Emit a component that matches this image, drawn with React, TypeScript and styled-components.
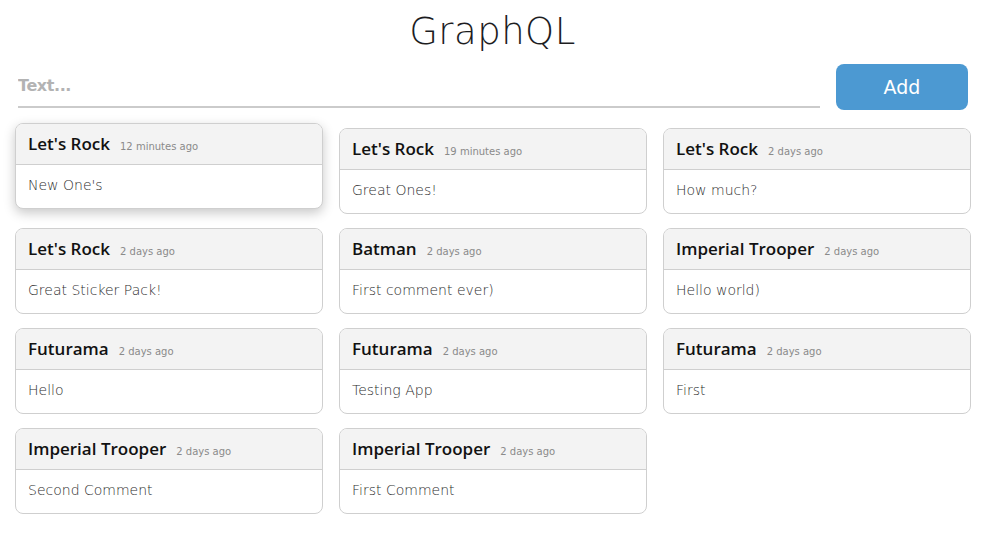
import React from "react";
import styled, { createGlobalStyle } from "styled-components";

const Global = createGlobalStyle`
  html, body { margin: 0; padding: 0; background: #fff; }
  body { font-family: "DejaVu Sans", "Noto Sans", sans-serif; }
  * { box-sizing: border-box; }
`;

const Page = styled.div`
  padding: 0 15px;
  width: 985px;
`;

const Title = styled.h1`
  margin: 0;
  padding-top: 10px;
  height: 58px;
  text-align: center;
  font-size: 37px;
  font-weight: 300;
  line-height: 44px;
  color: #1d1d1f;
  letter-spacing: 0.5px;
`;

const Form = styled.form`
  display: flex;
  align-items: center;
  gap: 16px;
  margin: 6px 2px 0 3px;
`;

const Input = styled.input`
  flex: 1;
  height: 44px;
  margin-top: -2px;
  border: none;
  border-bottom: 2px solid #cbcbcb;
  outline: none;
  padding: 0;
  font-family: inherit;
  font-size: 16px;
  font-weight: 700;
  letter-spacing: -0.4px;
  color: #333;
  background: transparent;
  &::placeholder { color: #b3b3b3; }
`;

const Button = styled.button`
  width: 132px;
  height: 46px;
  border: none;
  border-radius: 8px;
  background: #4c99d2;
  color: #fff;
  font-family: inherit;
  font-size: 19px;
  font-weight: 400;
`;

const Grid = styled.div`
  display: grid;
  grid-template-columns: repeat(3, 308px);
  column-gap: 16px;
  row-gap: 14px;
  margin-top: 18px;
`;

const Card = styled.div<{ $raised?: boolean }>`
  border: 1px solid #cfcfcf;
  border-radius: 8px;
  overflow: hidden;
  background: #fff;
  height: 86px;
  ${(p) =>
    p.$raised &&
    `
    transform: translateY(-5px);
    box-shadow: 0 4px 12px rgba(0,0,0,0.22);
  `}
`;

const Header = styled.div`
  display: flex;
  align-items: baseline;
  height: 41px;
  padding: 8px 12px 0;
  background: #f3f3f3;
  border-bottom: 1px solid #cfcfcf;
`;

const Name = styled.span`
  font-family: "Open Sans", "DejaVu Sans", sans-serif;
  font-size: 17px;
  font-weight: 600;
  color: #111;
`;

const Time = styled.span`
  margin-left: 10px;
  font-size: 10px;
  color: #8a8a8a;
`;

const Body = styled.div`
  padding: 12px 12px 0;
  font-size: 14px;
  font-weight: 300;
  color: #2e2e2e;
`;

const comments = [
  { name: "Let's Rock", time: "12 minutes ago", text: "New One's" },
  { name: "Let's Rock", time: "19 minutes ago", text: "Great Ones!" },
  { name: "Let's Rock", time: "2 days ago", text: "How much?" },
  { name: "Let's Rock", time: "2 days ago", text: "Great Sticker Pack!" },
  { name: "Batman", time: "2 days ago", text: "First comment ever)" },
  { name: "Imperial Trooper", time: "2 days ago", text: "Hello world)" },
  { name: "Futurama", time: "2 days ago", text: "Hello" },
  { name: "Futurama", time: "2 days ago", text: "Testing App" },
  { name: "Futurama", time: "2 days ago", text: "First" },
  { name: "Imperial Trooper", time: "2 days ago", text: "Second Comment" },
  { name: "Imperial Trooper", time: "2 days ago", text: "First Comment" },
];

export default function App() {
  return (
    <Page>
      <Global />
      <Title>GraphQL</Title>
      <Form onSubmit={(e) => e.preventDefault()}>
        <Input placeholder="Text..." />
        <Button type="submit">Add</Button>
      </Form>
      <Grid>
        {comments.map((c, i) => (
          <Card key={i} $raised={i === 0}>
            <Header>
              <Name>{c.name}</Name>
              <Time>{c.time}</Time>
            </Header>
            <Body>{c.text}</Body>
          </Card>
        ))}
      </Grid>
    </Page>
  );
}
